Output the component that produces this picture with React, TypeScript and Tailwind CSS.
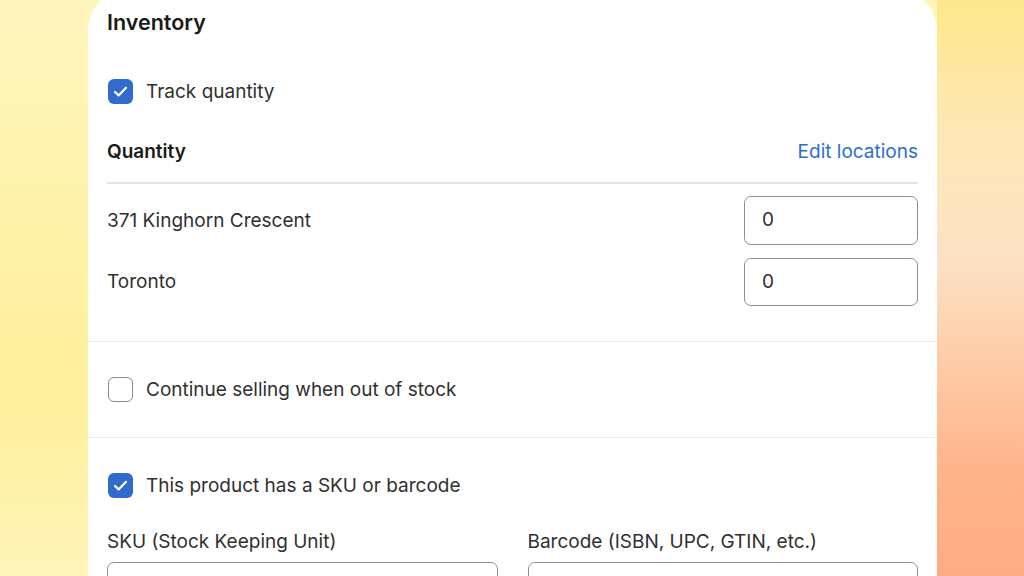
import React from "react";

function Check({ checked }: { checked: boolean }) {
  if (checked) {
    return (
      <span className="flex h-[25px] w-[25px] shrink-0 items-center justify-center rounded-[6px] bg-[#2f6ccb]">
        <svg width="25" height="25" viewBox="0 0 25 25" fill="none">
          <path d="M7 13 L10.6 16.4 L18 8.8" stroke="white" strokeWidth="2.2" strokeLinecap="round" strokeLinejoin="round" />
        </svg>
      </span>
    );
  }
  return <span className="block h-[25px] w-[25px] shrink-0 rounded-[6px] border-[1.5px] border-[#8a8a8a] bg-white" />;
}

export default function App() {
  return (
    <div
      className="flex h-[576px] w-[1024px] overflow-hidden bg-[linear-gradient(180deg,#fef5bd_0%,#fef1a2_50%,#fef09c_70%,#fef4b8_100%)] text-[#303030]"
      style={{ fontFamily: "Inter, 'Noto Sans', sans-serif" }}
    >
      <div className="w-[88px] shrink-0" />
      <div className="mt-[-10px] flex h-[620px] w-[849px] shrink-0 flex-col rounded-t-[40px] bg-white">
        <div className="flex flex-col px-[19px] pt-[18px] pb-[35px]">
          <h2 className="h-[28px] text-[21.5px] leading-[28px] font-semibold text-[#1a1a1a]">Inventory</h2>
          <div className="mt-[43px] flex h-[25px] items-center gap-[13px] pl-px">
            <Check checked />
            <span className="text-[19px] leading-[24px]">Track quantity</span>
          </div>
          <div className="mt-[36px] flex h-[24px] items-center justify-between">
            <span className="text-[19px] leading-[24px] font-semibold text-[#1a1a1a]">Quantity</span>
            <span className="text-[19px] leading-[24px] text-[#2c6ecb]">Edit locations</span>
          </div>
          <div className="mt-[18px] h-[2px] bg-[#e3e3e3]" />
          <div className="mt-[12px] flex items-center justify-between">
            <span className="text-[19px] leading-[24px]">371 Kinghorn Crescent</span>
            <div className="flex h-[49px] w-[174px] items-center rounded-[7px] border border-[#8f8f8f] px-[17px] text-[19px]">0</div>
          </div>
          <div className="mt-[13px] flex items-center justify-between">
            <span className="text-[19px] leading-[24px]">Toronto</span>
            <div className="flex h-[48px] w-[174px] items-center rounded-[7px] border border-[#8f8f8f] px-[17px] text-[19px]">0</div>
          </div>
        </div>
        <div className="h-[2px] bg-[#ebebeb]" />
        <div className="flex flex-col px-[19px] pt-[35px] pb-[35px]">
          <div className="flex h-[25px] items-center gap-[13px] pl-px">
            <Check checked={false} />
            <span className="text-[19px] leading-[24px]">Continue selling when out of stock</span>
          </div>
        </div>
        <div className="h-[2px] bg-[#ebebeb]" />
        <div className="flex flex-col px-[19px] pt-[35px]">
          <div className="flex h-[25px] items-center gap-[13px] pl-px">
            <Check checked />
            <span className="text-[19px] leading-[24px]">This product has a SKU or barcode</span>
          </div>
          <div className="mt-[32px] grid grid-cols-2 gap-x-[30px]">
            <div className="flex flex-col gap-[8px]">
              <span className="text-[19px] leading-[24px]">SKU (Stock Keeping Unit)</span>
              <div className="h-[48px] rounded-[7px] border border-[#8f8f8f]" />
            </div>
            <div className="flex flex-col gap-[8px]">
              <span className="text-[19px] leading-[24px]">Barcode (ISBN, UPC, GTIN, etc.)</span>
              <div className="h-[48px] rounded-[7px] border border-[#8f8f8f]" />
            </div>
          </div>
        </div>
      </div>
      <div className="flex-1 bg-[linear-gradient(180deg,#fee88c_0%,#fee8b8_25%,#fde1c4_45%,#ffc9a4_65%,#ffb48a_82%,#ffac86_100%)]" />
    </div>
  );
}
